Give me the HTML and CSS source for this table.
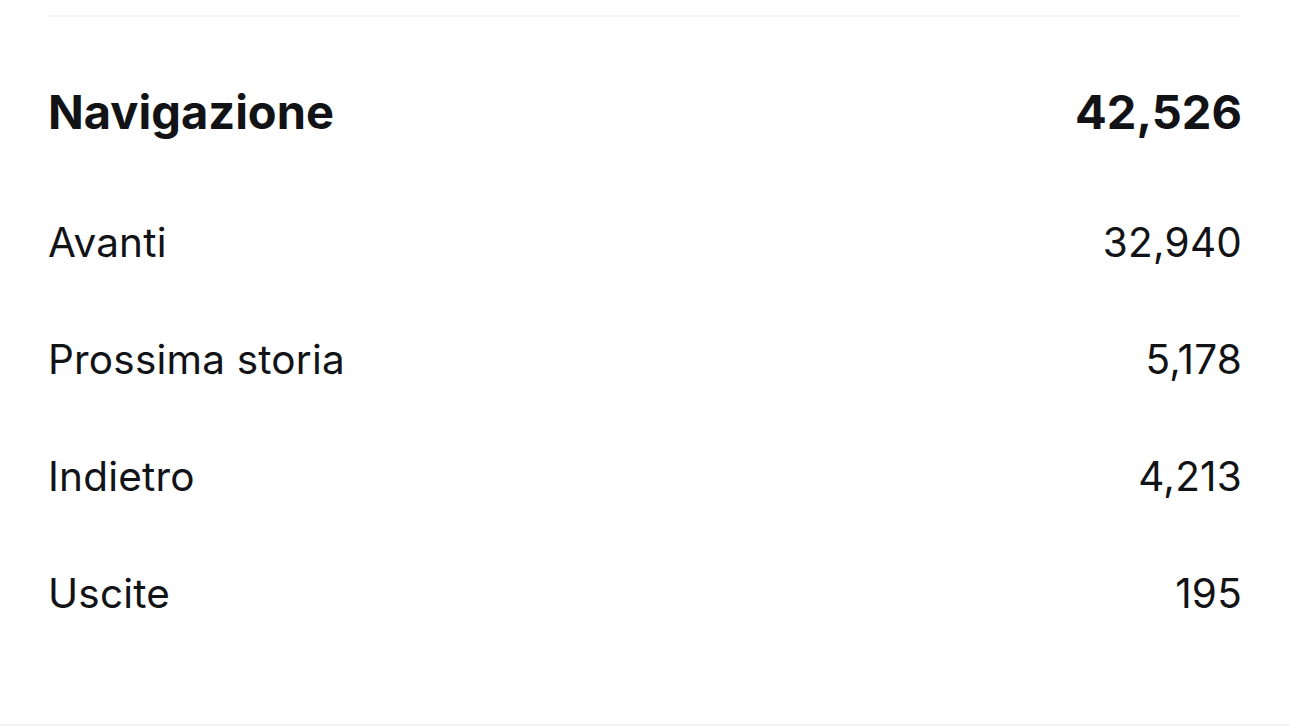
FILE: index.html
```html
<!DOCTYPE html>
<html lang="it">
<head>
  <meta charset="UTF-8">
  <title>Navigazione</title>
  <link rel="stylesheet" href="styles.css">
</head>
<body>

<div class="section">
  <div class="divider"></div>

  <div class="row heading">
    <span class="label">Navigazione</span>
    <span class="value">42,526</span>
  </div>

  <div class="row">
    <span class="label">Avanti</span>
    <span class="value">32,940</span>
  </div>
  <div class="row">
    <span class="label">Prossima storia</span>
    <span class="value">5,178</span>
  </div>
  <div class="row">
    <span class="label">Indietro</span>
    <span class="value">4,213</span>
  </div>
  <div class="row">
    <span class="label">Uscite</span>
    <span class="value">195</span>
  </div>
</div>

<div class="bottom-rule"></div>

</body>
</html>
```

FILE: styles.css
```css
html, body { margin: 0; padding: 0; background: #fff; }
body {
  font-family: Inter, "Noto Sans", "Liberation Sans", sans-serif;
  color: #121316;
  width: 1290px;
  height: 726px;
  overflow: hidden;
  display: flex;
  flex-direction: column;
}

.section { padding: 15px 48px 0 48px; flex: 1; }

.divider { height: 2px; background: #f6f6f6; }

.row {
  display: flex;
  justify-content: space-between;
  align-items: center;
  height: 117px;
  font-size: 40.5px;
  letter-spacing: 0.2px;
  font-weight: 400;
}

.row.heading {
  font-size: 47px;
  letter-spacing: 0;
  font-weight: 700;
  margin-top: 36px;
  margin-bottom: 14px;
}

.bottom-rule { height: 2px; background: #f4f4f4; }
```
